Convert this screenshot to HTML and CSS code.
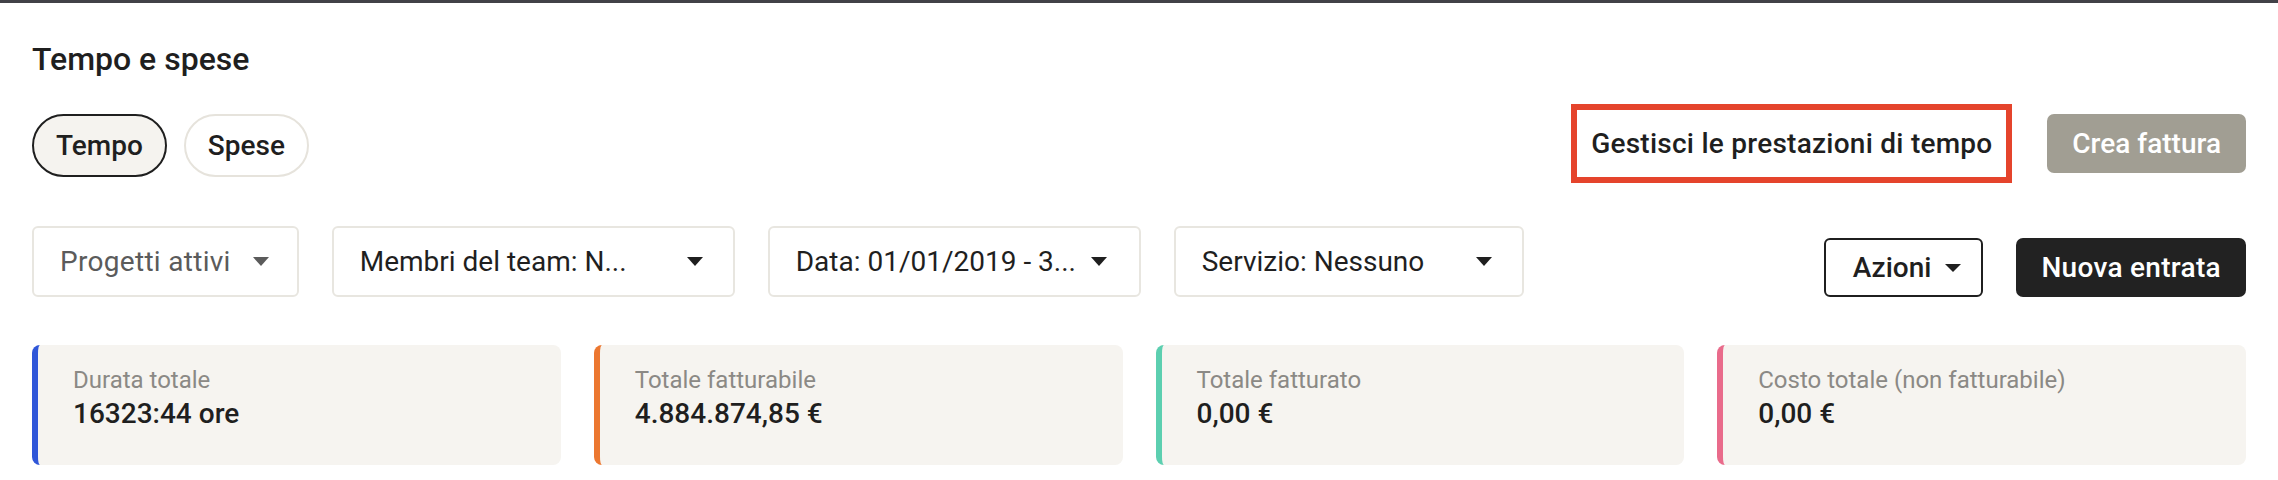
FILE: index.html
```html
<!DOCTYPE html>
<html lang="it">
<head>
<meta charset="utf-8">
<title>Tempo e spese</title>
<link rel="stylesheet" href="styles.css">
</head>
<body>
<div class="topbar"></div>
<main class="page">
  <h1 class="title">Tempo e spese</h1>
  <div class="toolbar">
    <div class="tabs">
      <button class="tab tab-active">Tempo</button>
      <button class="tab">Spese</button>
    </div>
    <div class="actions">
      <div class="highlight"><span>Gestisci le prestazioni di tempo</span></div>
      <button class="btn btn-muted">Crea fattura</button>
    </div>
  </div>
  <div class="filters">
    <div class="filter-group">
      <div class="dropdown dropdown-placeholder"><span class="dd-text">Progetti attivi</span><span class="caret"></span></div>
      <div class="dropdown dd-team"><span class="dd-text">Membri del team: N...</span><span class="caret"></span></div>
      <div class="dropdown dd-date"><span class="dd-text">Data: 01/01/2019 - 3...</span><span class="caret"></span></div>
      <div class="dropdown dd-service"><span class="dd-text">Servizio: Nessuno</span><span class="caret"></span></div>
    </div>
    <div class="actions actions-bottom">
      <button class="btn btn-outline">Azioni <span class="caret caret-small"></span></button>
      <button class="btn btn-dark">Nuova entrata</button>
    </div>
  </div>
  <div class="stats">
    <div class="card card-blue"><div class="card-label">Durata totale</div><div class="card-value">16323:44 ore</div></div>
    <div class="card card-orange"><div class="card-label">Totale fatturabile</div><div class="card-value">4.884.874,85 €</div></div>
    <div class="card card-teal"><div class="card-label">Totale fatturato</div><div class="card-value">0,00 €</div></div>
    <div class="card card-pink"><div class="card-label">Costo totale (non fatturabile)</div><div class="card-value">0,00 €</div></div>
  </div>
</main>
</body>
</html>
```

FILE: styles.css
```css
* { box-sizing: border-box; }
html, body { margin: 0; padding: 0; background: #ffffff; }
body {
  font-family: Roboto, "Liberation Sans", Arial, sans-serif;
  color: #1f1f1f;
  width: 2278px;
}
button { font-family: inherit; cursor: pointer; }

.topbar { height: 3px; background: #414147; }

.page { padding: 0 32px; }

.title {
  margin: 36px 0 0;
  font-size: 32px;
  line-height: 40px;
  font-weight: 500;
  color: #1f1f1f;
}

.toolbar {
  margin-top: 25px;
  display: flex;
  justify-content: space-between;
  align-items: center;
}

.tabs { display: flex; gap: 17px; padding-top: 4px; }
.tab {
  height: 63px;
  padding: 0 22px;
  border-radius: 32px;
  border: 2px solid #e6e3dc;
  background: #ffffff;
  font-size: 28px;
  font-weight: 500;
  color: #1f1f1f;
}
.tab-active { border-color: #1f1f1f; background: #f5f3ef; }

.actions { display: flex; align-items: center; gap: 35px; }
.actions-bottom { align-items: flex-end; gap: 33px; }

.highlight {
  width: 441px;
  height: 79px;
  border: 6px solid #e5442c;
  display: flex;
  align-items: center;
  justify-content: center;
  font-size: 28px;
  font-weight: 500;
  letter-spacing: 0.25px;
  color: #1f1f1f;
}

.btn {
  height: 59px;
  padding: 0 25px;
  border-radius: 7px;
  border: none;
  font-size: 28px;
  font-weight: 500;
  display: flex;
  align-items: center;
}
.btn-muted { background: #a19e93; color: #ffffff; }
.btn-dark { background: #222222; color: #ffffff; padding: 0 25px; letter-spacing: 0.3px; }
.btn-outline {
  background: #ffffff;
  color: #1f1f1f;
  border: 2px solid #1f1f1f;
  border-radius: 6px;
  padding: 0 20px 0 27px;
  gap: 14px;
}

.filters {
  margin-top: 43px;
  display: flex;
  justify-content: space-between;
  align-items: flex-end;
}
.filter-group { display: flex; gap: 33px; }

.dropdown {
  height: 71px;
  border: 2px solid #e8e6e0;
  border-radius: 6px;
  display: flex;
  align-items: center;
  justify-content: space-between;
  gap: 10px;
  padding: 0 30px 0 26px;
  font-size: 28px;
  color: #1f1f1f;
}
.dd-text { white-space: nowrap; flex: none; }
.dd-team { width: 403px; }
.dd-date { width: 373px; padding-right: 32px; }
.dd-service { width: 350px; }
.dropdown-placeholder { color: #5b5b5b; padding-right: 28px; letter-spacing: 0.3px; gap: 22px; }

.caret {
  width: 0;
  height: 0;
  border-left: 8px solid transparent;
  border-right: 8px solid transparent;
  border-top: 9px solid currentColor;
  flex: none;
}
.caret-small {
  border-left-width: 8px;
  border-right-width: 8px;
  border-top-width: 8px;
}

.stats {
  margin-top: 48px;
  display: grid;
  grid-template-columns: repeat(4, 1fr);
  gap: 33px;
}
.card {
  height: 120px;
  background: #f6f4f0;
  border-radius: 8px;
  border-left: 6px solid #2f55d6;
  padding: 21px 20px 0 35px;
}
.card-blue { border-left-color: #2f56d8; }
.card-orange { border-left-color: #ec7730; }
.card-teal { border-left-color: #5ccfb0; }
.card-pink { border-left-color: #e96b8b; }
.card-label {
  font-size: 24px;
  line-height: 28px;
  color: #8b8985;
  margin-bottom: 3px;
}
.card-value {
  font-size: 28px;
  line-height: 34px;
  font-weight: 500;
  color: #1f1f1f;
}
```
